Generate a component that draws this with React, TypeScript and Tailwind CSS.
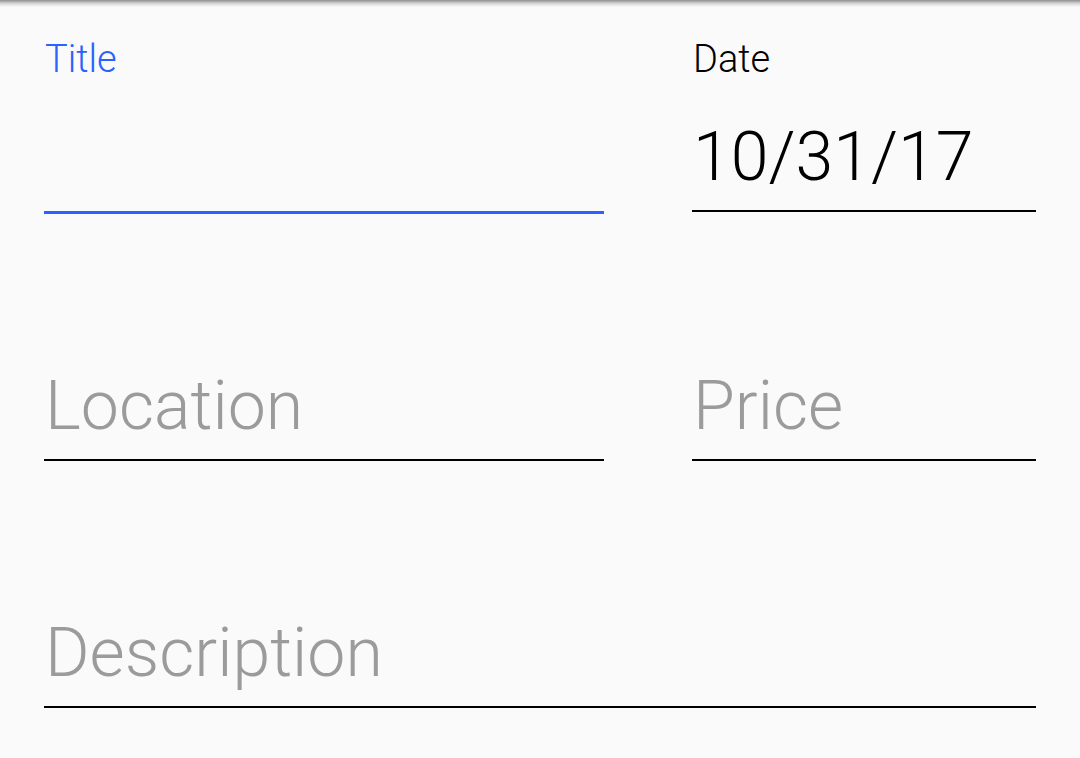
import * as React from "react";

type FieldProps = {
  label: string;
  value?: string;
  focused?: boolean;
  className?: string;
};

function Field({ label, value, focused, className = "" }: FieldProps) {
  const hasValue = !!value;
  const showLabel = focused || hasValue;

  return (
    <div className={["flex flex-col", className].join(" ")}>
      {/* floating label */}
      <div
        className={[
          "h-[44px] pl-px text-[38px] leading-[44px] font-light",
          focused ? "text-[#2962ff]" : "text-black",
          showLabel ? "" : "invisible",
        ].join(" ")}
      >
        {label}
      </div>

      {/* value / hint */}
      <div
        className={[
          "mt-[36px] h-[80px] pl-px text-[68px] leading-[80px] font-light whitespace-nowrap",
          hasValue ? "text-black" : "text-[#9b9b9b]",
        ].join(" ")}
      >
        {hasValue ? value : focused ? "" : label}
      </div>

      {/* underline */}
      <div
        className={
          focused
            ? "mt-[14px] h-[3px] bg-[#2962ff]"
            : "mt-[13px] h-[2px] bg-black"
        }
      />
    </div>
  );
}

export default function App() {
  return (
    <div
      className="relative h-[758px] w-[1080px] overflow-hidden bg-[#fafafa]"
      style={{ fontFamily: "Roboto, 'Noto Sans', sans-serif" }}
    >
      {/* shadow of the toolbar above */}
      <div className="absolute inset-x-0 top-0 h-[7px] bg-gradient-to-b from-[#8f8f8f] via-[#d6d6d6] to-[#fafafa]" />

      <div className="flex flex-col gap-[72px] px-[44px] pt-[37px]">
        <div className="grid grid-cols-[560px_344px] gap-[88px]">
          <Field label="Title" focused />
          <Field label="Date" value="10/31/17" />
        </div>
        <div className="grid grid-cols-[560px_344px] gap-[88px]">
          <Field label="Location" />
          <Field label="Price" />
        </div>
        <Field label="Description" />
      </div>
    </div>
  );
}
